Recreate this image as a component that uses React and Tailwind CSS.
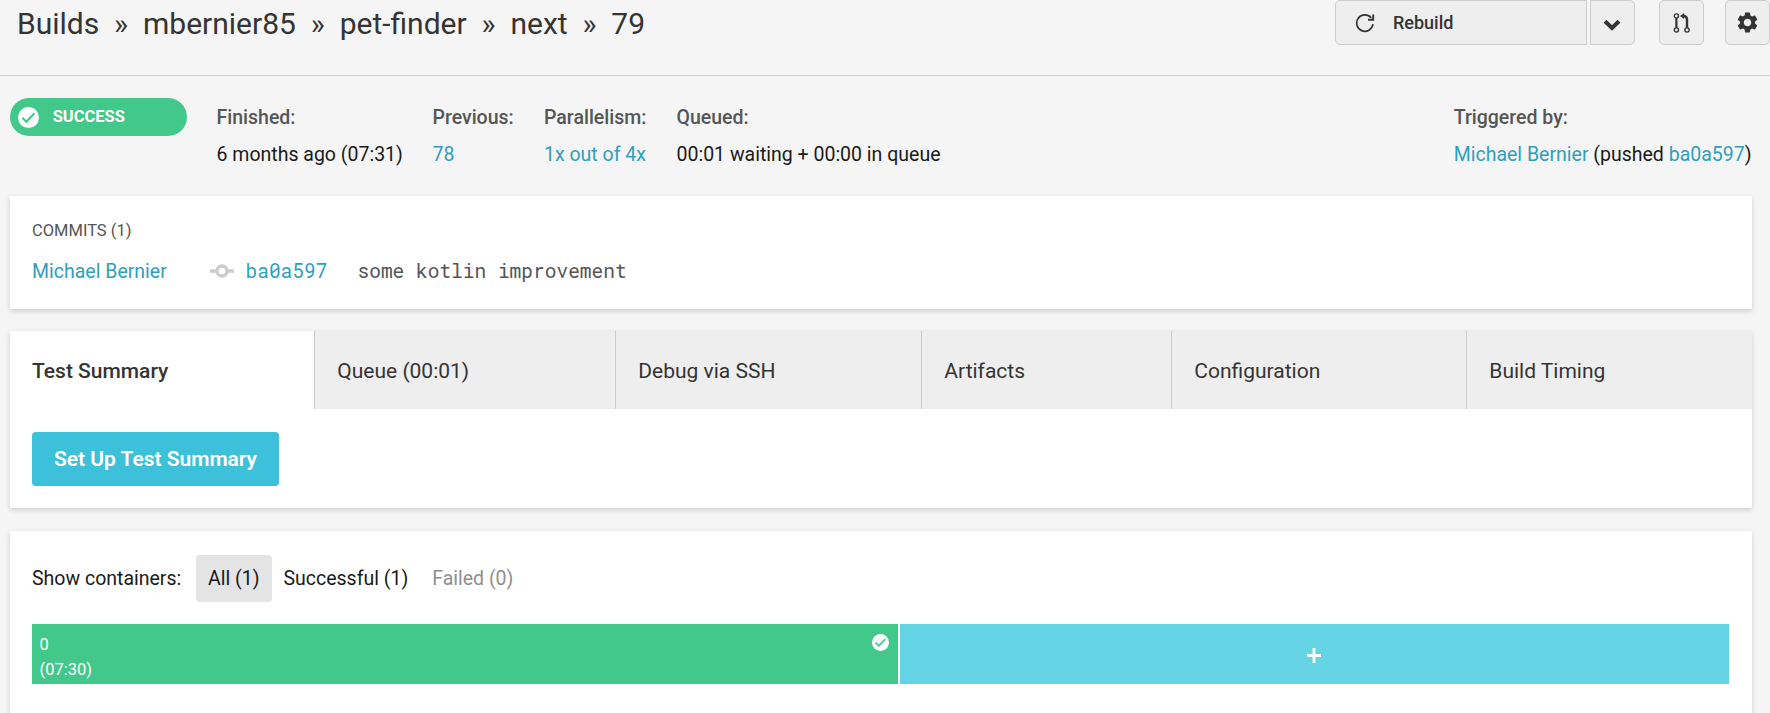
import { useState } from "react";
import { MdSettings } from "react-icons/md";

const crumbs = ["Builds", "mbernier85", "pet-finder", "next", "79"];

const tabs = [
  { label: "Test Summary", width: "w-[304px]" },
  { label: "Queue (00:01)", width: "w-[301px]" },
  { label: "Debug via SSH", width: "w-[306px]" },
  { label: "Artifacts", width: "w-[250px]" },
  { label: "Configuration", width: "w-[295px]" },
  { label: "Build Timing", width: "flex-1" },
];

const filters = [
  { label: "All (1)", color: "text-[#1a1a1a]" },
  { label: "Successful (1)", color: "text-[#1a1a1a]" },
  { label: "Failed (0)", color: "text-[#8e8e8e]" },
];

function RebuildIcon() {
  return (
    <svg width="20" height="20" viewBox="0 0 20 20" fill="none" stroke="#343434" strokeWidth="1.7">
      <path d="M18 11.2A8.2 8.2 0 1 1 16.2 4.8" />
      <path d="M18.2 1.6v5.2h-5.2" strokeWidth="1.9" />
    </svg>
  );
}

function ChevronIcon() {
  return (
    <svg width="18" height="12" viewBox="0 0 18 12" fill="none" stroke="#343434" strokeWidth="4">
      <path d="M2 2.2L9 9L16 2.2" />
    </svg>
  );
}

function PullRequestIcon() {
  return (
    <svg width="18" height="20" viewBox="0 0 18 20" fill="none" stroke="#343434">
      <circle cx="3.4" cy="3" r="2.1" strokeWidth="1.4" />
      <circle cx="3.4" cy="17" r="2.1" strokeWidth="1.4" />
      <circle cx="14" cy="17" r="2.1" strokeWidth="1.4" />
      <path d="M3.4 5v10" strokeWidth="2.2" />
      <path d="M14 15V6.4Q14 3 10.4 3" strokeWidth="2.4" />
      <path d="M11.2 0v6L7 3z" fill="#343434" stroke="none" />
    </svg>
  );
}

function CheckIcon({ size }) {
  return (
    <svg width={size} height={size} viewBox="0 0 22 22" fill="none">
      <circle cx="11" cy="11" r="11" fill="#fff" />
      <path d="M4.6 11.2L8.8 15.4L17.2 6.6" stroke="#42c88a" strokeWidth="2.2" />
    </svg>
  );
}

function CommitIcon() {
  return (
    <svg width="24" height="14" viewBox="0 0 24 14" fill="none" stroke="#ccc" strokeWidth="3.4">
      <circle cx="12" cy="7" r="5" />
      <path d="M0 7h6.5M17.5 7H24" />
    </svg>
  );
}

function Info({ label, children, className = "" }) {
  return (
    <div className={`leading-[37px] text-[19.5px] whitespace-nowrap ${className}`}>
      <div className="font-medium text-[#555]">{label}</div>
      <div className="text-[#1a1a1a]">{children}</div>
    </div>
  );
}

function Link({ children, className = "" }) {
  return <a className={`text-[#2e9fbc] cursor-pointer ${className}`}>{children}</a>;
}

function Card({ children, className = "" }) {
  return (
    <section className={`bg-white shadow-[0_2px_5px_rgba(0,0,0,0.16)] ${className}`}>
      {children}
    </section>
  );
}

export default function App() {
  const [tab, setTab] = useState(0);
  const [filter, setFilter] = useState(0);

  return (
    <div className="w-full h-[713px] overflow-hidden bg-[#f5f5f5] font-['Roboto',sans-serif]">
      {/* Header */}
      <header className="h-[76px] flex items-start justify-between border-b border-[#ccc]">
        <nav className="flex pl-[17px] text-[30px] leading-[47px] text-[#343434]">
          {crumbs.map((crumb, i) => (
            <div key={crumb} className="flex">
              {i > 0 && <span className="mx-[14.85px]">»</span>}
              <span>{crumb}</span>
            </div>
          ))}
        </nav>

        <div className="flex">
          <button className="w-[252px] h-[45px] mr-[3px] pl-[18.5px] flex items-center gap-[18.5px] bg-[#eee] border border-[#ccc] rounded-l-[5px] text-[18px] font-medium text-[#343434]">
            <RebuildIcon />
            Rebuild
          </button>
          <button className="w-[45px] h-[45px] mr-6 pt-1 pr-px flex items-center justify-center bg-[#eee] border border-[#ccc] rounded-r-[5px]">
            <ChevronIcon />
          </button>
          <button className="w-[45px] h-[45px] mr-[21px] flex items-center justify-center bg-[#eee] border border-[#ccc] rounded-[5px]">
            <PullRequestIcon />
          </button>
          <button className="w-[45px] h-[45px] flex items-center justify-center bg-[#eee] border border-[#ccc] rounded-[5px] text-[#343434]">
            <MdSettings size={25} />
          </button>
        </div>
      </header>

      <main className="pl-[10px] pr-[18px]">
        {/* Build status */}
        <div className="h-[120px] pt-[22px] flex items-start">
          <div className="w-[177px] h-[38px] mr-[29.5px] pl-2 flex items-center gap-[13.7px] bg-[#42c88a] rounded-full text-[16.5px] font-bold text-white">
            <CheckIcon size={21} />
            SUCCESS
          </div>
          <Info label="Finished:" className="w-[216px] pt-px">6 months ago (07:31)</Info>
          <Info label="Previous:" className="w-[111.5px] pt-px"><Link>78</Link></Info>
          <Info label="Parallelism:" className="w-[132.5px] pt-px"><Link>1x out of 4x</Link></Info>
          <Info label="Queued:" className="pt-px">00:01 waiting + 00:00 in queue</Info>
          <Info label="Triggered by:" className="ml-auto mr-[0.5px] pt-px">
            <Link>Michael Bernier</Link> (pushed <Link>ba0a597</Link>)
          </Info>
        </div>

        {/* Commits */}
        <Card className="h-[113px] px-[22px] pt-[23px] mb-[22px]">
          <h2 className="text-[16.5px] leading-6 text-[#555]">COMMITS (1)</h2>
          <div className="flex items-center mt-[13px] text-[19.5px] leading-[30px] text-[#555]">
            <Link className="w-[178px] pt-[2px] -my-px">Michael Bernier</Link>
            <CommitIcon />
            <Link className="ml-[11.5px] w-[112px] font-['Roboto_Mono','DejaVu_Sans_Mono',monospace]">ba0a597</Link>
            <span className="font-['Roboto_Mono','DejaVu_Sans_Mono',monospace]">some kotlin improvement</span>
          </div>
        </Card>

        {/* Tabs */}
        <Card className="h-[177px] mb-[23px]">
          <div className="flex h-[78px] text-[21px] text-[#343434]">
            {tabs.map((t, i) => (
              <button
                key={t.label}
                onClick={() => setTab(i)}
                className={`${t.width} h-full text-left pt-1 ${i > 0 ? "border-l border-[#ccc] pl-[22.3px]" : "pl-[22px]"} ${
                  tab === i ? "bg-white font-medium" : "bg-[#eee]"
                }`}
              >
                {t.label}
              </button>
            ))}
          </div>
          <button className="w-[247px] h-[54px] ml-[22px] mt-[23px] pt-[2px] rounded bg-[#3dc0d9] text-[21px] font-semibold tracking-[-0.03px] text-white">
            Set Up Test Summary
          </button>
        </Card>

        {/* Containers */}
        <Card className="h-[220px] px-[22px] pt-6">
          <div className="flex items-center h-[47px] text-[19.5px] text-[#1a1a1a]">
            <span className="w-[164px]">Show containers:</span>
            {filters.map((f, i) => (
              <button
                key={f.label}
                onClick={() => setFilter(i)}
                className={`h-full rounded whitespace-nowrap ${f.color} ${
                  filter === i ? "pl-3 pr-[13px] -mr-px bg-[#e4e4e4]" : "px-3"
                }`}
              >
                {f.label}
              </button>
            ))}
          </div>
          <div className="flex gap-[2px] h-[60px] mt-[22px] mr-[1px]">
            <div className="w-[866px] flex items-start justify-between pl-[7.5px] pr-[9px] pt-2 bg-[#42c88a] text-[16.5px] leading-[25px] text-white">
              <div>
                <div>0</div>
                <div>(07:30)</div>
              </div>
              <div className="pt-[2px]">
                <CheckIcon size={17} />
              </div>
            </div>
            <div className="flex-1 flex items-center justify-center pt-[3px] pr-[2px] bg-[#64d3e4]">
              <svg width="14" height="15" viewBox="0 0 14 15" stroke="#fff" strokeWidth="2.8">
                <path d="M7 0v15M0 7.5h14" />
              </svg>
            </div>
          </div>
        </Card>
      </main>
    </div>
  );
}
